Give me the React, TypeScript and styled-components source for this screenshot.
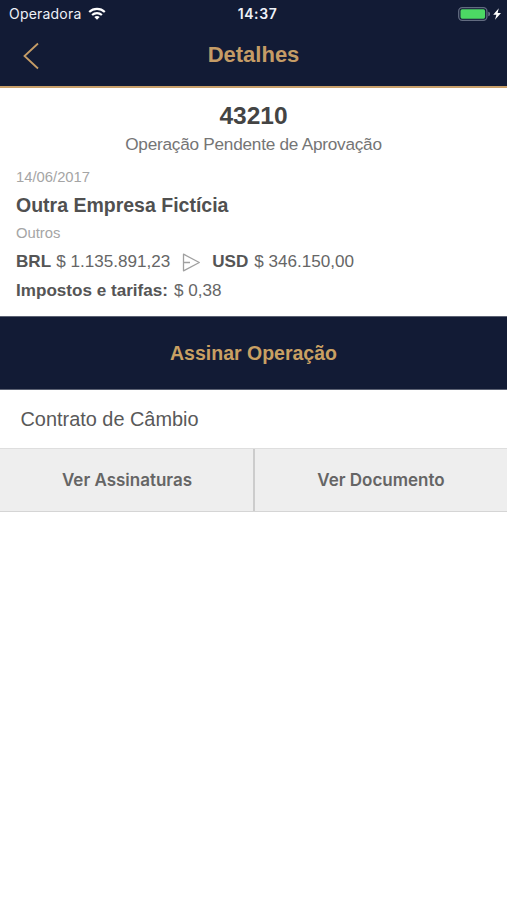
import React from "react";
import styled, { createGlobalStyle } from "styled-components";

const Global = createGlobalStyle`
  * { box-sizing: border-box; }
  body { margin: 0; background: #fff; font-family: "Liberation Sans", Arial, sans-serif; }
  h1, h2, h3, p { margin: 0; font-weight: 400; }
  button { border: 0; margin: 0; padding: 0; background: none; font: inherit; }
`;

const Screen = styled.main`
  width: 100%;
  min-height: 900px;
  background: #fff;
  color: #565656;
`;

const Header = styled.header`
  height: 88px;
  background: #121b35;
  border-bottom: 2px solid #c9a06a;
`;

const StatusBar = styled.div`
  display: grid;
  grid-template-columns: 1fr auto 1fr;
  align-items: center;
  height: 28px;
  padding: 0 5px 0 9px;
  color: #eef1f8;
  font: 400 14px/28px Inter, sans-serif;
`;

const Carrier = styled.div`
  display: flex;
  align-items: center;
  gap: 7px;
  letter-spacing: 0.2px;

  svg {
    margin-top: -2px;
  }
`;

const Clock = styled.div`
  padding-left: 4px;
  font-weight: 600;
  letter-spacing: 0.6px;
`;

const Power = styled.div`
  display: flex;
  align-items: center;
  justify-content: flex-end;
  height: 26px;
`;

const NavBar = styled.div`
  display: grid;
  grid-template-columns: 64px 1fr 64px;
  align-items: center;
  height: 55px;
`;

const BackButton = styled.button`
  display: flex;
  padding-left: 22px;
`;

const Title = styled.h1`
  padding-bottom: 2px;
  color: #c59c66;
  text-align: center;
  font-size: 22px;
  line-height: 26px;
  font-weight: 700;
`;

const Details = styled.section`
  height: 228px;
  padding: 12px 16px 0;
`;

const Reference = styled.h2`
  height: 30px;
  text-align: center;
  color: #444;
  font-size: 24.5px;
  line-height: 31px;
  font-weight: 700;
`;

const State = styled.p`
  text-align: center;
  color: #757575;
  font-size: 17.2px;
  line-height: 28px;
  letter-spacing: -0.24px;
`;

const Meta = styled.p`
  height: 28px;
  color: #a5a5a5;
  font-size: 14.8px;
  line-height: 28px;
`;

const DateMeta = styled(Meta)`
  margin-top: 5px;
`;

const Company = styled.h3`
  color: #505050;
  font-size: 19.5px;
  line-height: 28px;
  font-weight: 700;
`;

const AmountLine = styled.div`
  display: flex;
  align-items: center;
  height: 28.5px;
  padding-top: 2px;
  font-size: 17.1px;
  line-height: 28px;
  white-space: pre;
`;

const Label = styled.strong<{ $gap?: number }>`
  margin-right: ${(p) => p.$gap ?? 6}px;
  color: #555;
`;

const Value = styled.span`
  color: #666;
`;

const Arrow = styled.svg`
  margin: 0 11px 0 12px;
`;

const SignButton = styled.button`
  display: block;
  width: 100%;
  height: 74px;
  background: #121b35;
  border-top: 1px solid #5c6273;
  border-bottom: 1px solid #5c6273;
  color: #c9a063;
  font-size: 19.5px;
  font-weight: 700;
`;

const DocumentTitle = styled.h3`
  height: 58px;
  padding-left: 20.5px;
  color: #595959;
  font-size: 19.9px;
  line-height: 59px;
`;

const Actions = styled.div`
  display: grid;
  grid-template-columns: 255px 1fr;
  height: 64px;
  border-top: 1px solid #dedede;
  border-bottom: 1px solid #d5d5d5;
  background: #eee;
`;

const Action = styled.button`
  color: #656565;
  font: 600 17px Inter, sans-serif;

  &:first-child {
    padding-left: 1px;
    border-right: 2px solid #ccc;
  }
`;

export default function App() {
  return (
    <Screen>
      <Global />
      <Header>
        <StatusBar>
          <Carrier>
            Operadora
            <svg width="18" height="13" viewBox="0 0 18 13" fill="none" stroke="#fff" strokeWidth="2.2">
              <path d="M1.2 5C5.6.9 12.4.9 16.8 5" />
              <path d="M4.1 8C6.9 5.5 11.1 5.5 13.9 8" />
              <path d="M9 12.7 6.3 10C7.8 8.6 10.2 8.6 11.7 10Z" fill="#fff" stroke="none" />
            </svg>
          </Carrier>
          <Clock>14:37</Clock>
          <Power>
            <svg width="44" height="14" viewBox="0 0 44 14">
              <rect x=".7" y=".7" width="28.2" height="12.6" rx="3.5" fill="none" stroke="#626b80" strokeWidth="1.3" />
              <rect x="2.5" y="2.3" width="24.6" height="9.4" rx="1.6" fill="#4cd964" />
              <path d="M30.3 4.7C32.5 5 32.5 9 30.3 9.3Z" fill="#747c90" />
              <path d="M40.8 1.3 35.2 7.7h3.2l-1.4 5 6-6.7h-3.4Z" fill="#fff" />
            </svg>
          </Power>
        </StatusBar>
        <NavBar>
          <BackButton aria-label="Voltar">
            <svg width="18" height="28" viewBox="0 0 18 28" fill="none" stroke="#c59c66" strokeWidth="1.8">
              <path d="M16 1.5 2.5 14 16 26.5" />
            </svg>
          </BackButton>
          <Title>Detalhes</Title>
        </NavBar>
      </Header>
      <Details>
        <Reference>43210</Reference>
        <State>Operação Pendente de Aprovação</State>
        <DateMeta>14/06/2017</DateMeta>
        <Company>Outra Empresa Fictícia</Company>
        <Meta>Outros</Meta>
        <AmountLine>
          <Label $gap={5}>BRL</Label>
          <Value>$ 1.135.891,23</Value>
          <Arrow width="19" height="19" viewBox="0 0 19 19" fill="none" stroke="#a0a0a0" strokeWidth="1.3" strokeLinejoin="round">
            <path d="M1.5 1.2 17.3 9.5 1.5 17.8ZM1.5 9.5H8" />
          </Arrow>
          <Label>USD</Label>
          <Value>$ 346.150,00</Value>
        </AmountLine>
        <AmountLine>
          <Label>Impostos e tarifas:</Label>
          <Value>$ 0,38</Value>
        </AmountLine>
      </Details>
      <SignButton>Assinar Operação</SignButton>
      <DocumentTitle>Contrato de Câmbio</DocumentTitle>
      <Actions>
        <Action>Ver Assinaturas</Action>
        <Action>Ver Documento</Action>
      </Actions>
    </Screen>
  );
}
